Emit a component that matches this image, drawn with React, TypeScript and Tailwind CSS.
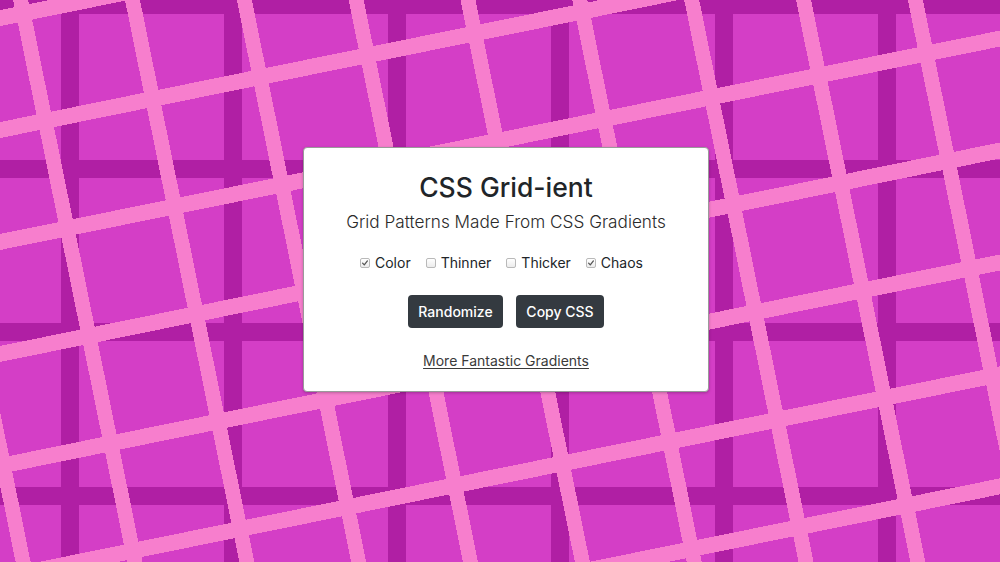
import { useState } from "react"

function Check({ label, checked, onChange }: { label: string; checked: boolean; onChange: () => void }) {
  return (
    <label className="flex items-center gap-[5px] cursor-pointer" onClick={onChange}>
      <span className="flex h-[10px] w-[10px] items-center justify-center rounded-[2px] border border-[#b9b9b9] bg-[linear-gradient(#ffffff,#ececec)]">
        {checked && (
          <svg viewBox="0 0 10 10" className="h-[8px] w-[8px]">
            <path d="M2 5.2 L4.1 7.4 L8 2.4" fill="none" stroke="#555" strokeWidth="1.6" strokeLinecap="round" strokeLinejoin="round" />
          </svg>
        )}
      </span>
      <span>{label}</span>
    </label>
  )
}

export default function App() {
  const [opts, setOpts] = useState({ color: true, thinner: false, thicker: false, chaos: true })
  const toggle = (k: keyof typeof opts) => setOpts({ ...opts, [k]: !opts[k] })

  return (
    <div className="flex h-screen w-full items-center justify-center bg-[#d43ec6] [background-image:repeating-linear-gradient(78.5deg,transparent_0_15.3px,#f77ecd_15.3px_30px,transparent_30px_109.6px),repeating-linear-gradient(168.5deg,transparent_0_9.9px,#f77ecd_9.9px_25.6px,transparent_25.6px_109.7px),repeating-linear-gradient(90deg,transparent_0_61px,#b01fa4_61px_79px,transparent_79px_163.5px),repeating-linear-gradient(180deg,#b01fa4_0_14.5px,transparent_14.5px_160px,#b01fa4_160px_163.5px)] font-['Inter','Liberation_Sans',sans-serif]">
      <div className="mb-[23px] ml-[12px] flex h-[245px] w-[406px] flex-col items-center rounded-[4px] border border-[#9a9a9a] bg-white pt-[23px] shadow-[0_1px_3px_rgba(0,0,0,0.25)]">
        <h1 className="text-[26.5px] font-medium leading-[32px] text-[#212529]">CSS Grid-ient</h1>
        <p className="mt-[7px] text-[17.2px] font-light leading-[24px] text-[#2b2b2b]">Grid Patterns Made From CSS Gradients</p>
        <div className="mr-[9px] mt-[19px] flex h-[20px] items-center gap-[15px] text-[14px] leading-[20px] text-[#212529]">
          <Check label="Color" checked={opts.color} onChange={() => toggle("color")} />
          <Check label="Thinner" checked={opts.thinner} onChange={() => toggle("thinner")} />
          <Check label="Thicker" checked={opts.thicker} onChange={() => toggle("thicker")} />
          <Check label="Chaos" checked={opts.chaos} onChange={() => toggle("chaos")} />
        </div>
        <div className="mt-[22px] flex gap-[13px]">
          <button className="h-[33px] w-[95px] rounded-[4px] bg-[#343a40] text-[14px] font-medium text-white">Randomize</button>
          <button className="h-[33px] w-[88px] rounded-[4px] bg-[#343a40] text-[14px] font-medium text-white">Copy CSS</button>
        </div>
        <a href="#" className="mt-[23px] text-[14px] leading-[20px] text-[#3a3a3a] underline underline-offset-[2px]">
          More Fantastic Gradients
        </a>
      </div>
    </div>
  )
}
